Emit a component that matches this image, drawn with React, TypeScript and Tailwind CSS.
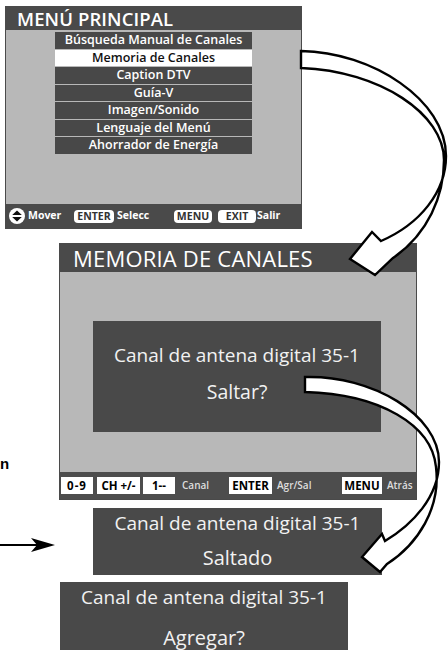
const menuItems = [
  "Búsqueda Manual de Canales",
  "Memoria de Canales",
  "Caption DTV",
  "Guía-V",
  "Imagen/Sonido",
  "Lenguaje del Menú",
  "Ahorrador de Energía",
];

function UpDownIcon() {
  return (
    <svg width="16" height="16" viewBox="0 0 16 16" className="block">
      <circle cx="8" cy="8" r="8" fill="#ffffff" />
      <polygon points="3.2,7 12.8,7 8,2.4" fill="#111111" />
      <polygon points="3.2,9 12.8,9 8,13.6" fill="#111111" />
    </svg>
  );
}

function Arrows() {
  return (
    <svg
      width="448"
      height="650"
      viewBox="0 0 448 650"
      className="absolute left-0 top-0 pointer-events-none"
    >
      <path
        d="M301,51 C372,52 446,100 446,156 C446,192 420,224 381,241 L372,232 L350,259 L375,275 L393,258 C428,234 444,196 444,160 C444,114 380,71 301,68 Z"
        fill="#ffffff"
        stroke="#000000"
        strokeWidth="2.4"
        strokeLinejoin="miter"
      />
      <path
        d="M305,377 C372,375 439,415 439,462 C439,497 412,525 385,541 L382,534 L362,557 L380,572 L387,564 C418,544 441,508 436,467 C432,425 380,394 305,392 Z"
        fill="#ffffff"
        stroke="#000000"
        strokeWidth="2.4"
        strokeLinejoin="miter"
      />
      <line x1="0" y1="545" x2="40" y2="545" stroke="#000000" strokeWidth="2.2" />
      <path d="M31,538 L55,545 L31,552 L37,545 Z" fill="#000000" />
    </svg>
  );
}

export default function App() {
  return (
    <div className="relative w-[448px] h-[650px] overflow-hidden bg-white font-['Open_Sans',sans-serif]">
      <div className="flex flex-col">
        {/* Screen 1: MENÚ PRINCIPAL */}
        <div className="mt-[6px] ml-[5px] w-[297px] h-[223px] flex flex-col border border-[#4a4a4a] bg-[#b8b8b8]">
          <div className="h-[23px] bg-[#4a4a4a] text-white text-[18.5px] font-semibold leading-[24px] pl-[11px] tracking-[0.1px] whitespace-nowrap">
            MENÚ PRINCIPAL
          </div>
          <div className="flex-1 pt-[2px] pl-[49px]">
            <div className="w-[197px] flex flex-col gap-px">
              {menuItems.map((item, i) => (
                <div
                  key={item}
                  className={
                    i === 1
                      ? "h-[16.5px] bg-white text-[#111111] text-[12.5px] font-semibold leading-[16.5px] text-center whitespace-nowrap"
                      : "h-[16.5px] bg-[#484848] text-white text-[12.5px] font-semibold leading-[16.5px] text-center whitespace-nowrap"
                  }
                >
                  {item}
                </div>
              ))}
            </div>
          </div>
          <div className="h-[24px] bg-[#4a4a4a] flex items-center text-white text-[10.5px] font-bold whitespace-nowrap">
            <div className="ml-[3px] w-[16px]">
              <UpDownIcon />
            </div>
            <span className="ml-[3px] w-[46px]">Mover</span>
            <span className="w-[40px] h-[13px] rounded-[4px] bg-white text-[#333333] flex items-center justify-center leading-none">
              ENTER
            </span>
            <span className="ml-[3px] w-[57px]">Selecc</span>
            <span className="w-[38px] h-[13px] rounded-[4px] bg-white text-[#333333] flex items-center justify-center leading-none">
              MENU
            </span>
            <span className="ml-[6px] w-[38px] h-[13px] rounded-[4px] bg-white text-[#333333] flex items-center justify-center leading-none">
              EXIT
            </span>
            <span className="ml-[1px]">Salir</span>
          </div>
        </div>

        {/* Screen 2: MEMORIA DE CANALES */}
        <div className="mt-[14px] ml-[59px] w-[358px] h-[257px] flex flex-col border border-[#4a4a4a] bg-[#b8b8b8]">
          <div className="h-[28px] bg-[#4a4a4a] text-white text-[22px] font-medium leading-[29px] pl-[13px] tracking-[0.2px] whitespace-nowrap">
            MEMORIA DE CANALES
          </div>
          <div className="h-[200px] pt-[49px] pl-[33px]">
            <div className="w-[288px] h-[111px] bg-[#494949] flex flex-col items-center pt-[19px] gap-[7px] text-[#f2f2f2] font-medium whitespace-nowrap">
              <div className="h-[30px] leading-[30px] text-[19px]">Canal de antena digital 35-1</div>
              <div className="h-[30px] leading-[30px] text-[19.5px]">Saltar?</div>
            </div>
          </div>
          <div className="flex-1 bg-[#4d4d4d] flex items-center pl-[1px] whitespace-nowrap">
            <span className="w-[32px] h-[17px] bg-white text-black text-[11.5px] font-bold tracking-[1px] flex items-center justify-center leading-none">
              0-9
            </span>
            <span className="ml-[4px] w-[43px] h-[17px] bg-white text-black text-[11.5px] font-bold flex items-center justify-center leading-none">
              CH +/-
            </span>
            <span className="ml-[3px] w-[32px] h-[17px] bg-white text-black text-[11.5px] font-bold flex items-center justify-center leading-none">
              1--
            </span>
            <span className="ml-[7px] w-[47px] text-[10px] font-semibold text-[#dddddd]">Canal</span>
            <span className="w-[43px] h-[17px] bg-white text-black text-[11.5px] font-bold flex items-center justify-center leading-none">
              ENTER
            </span>
            <span className="ml-[5px] w-[65px] text-[10px] font-semibold text-[#dddddd]">Agr/Sal</span>
            <span className="w-[40px] h-[17px] bg-white text-black text-[11.5px] font-bold flex items-center justify-center leading-none">
              MENU
            </span>
            <span className="ml-[5px] text-[10px] font-semibold text-[#dddddd]">Atrás</span>
          </div>
        </div>

        {/* Saltado box */}
        <div className="mt-[8px] ml-[93px] w-[289px] h-[67px] bg-[#494949] flex flex-col items-center gap-[5px] text-[#f2f2f2] font-medium whitespace-nowrap">
          <div className="h-[30px] leading-[30px] text-[19px]">Canal de antena digital 35-1</div>
          <div className="h-[30px] leading-[30px] text-[20px]">Saltado</div>
        </div>

        {/* Agregar box */}
        <div className="mt-[7px] ml-[60px] w-[288px] h-[72px] bg-[#494949] flex flex-col items-center gap-[11px] text-[#f2f2f2] font-medium whitespace-nowrap">
          <div className="h-[30px] leading-[30px] text-[19px]">Canal de antena digital 35-1</div>
          <div className="h-[30px] leading-[30px] text-[20px]">Agregar?</div>
        </div>
      </div>

      <span className="absolute left-0 top-[456px] text-[15px] font-bold text-black font-['Liberation_Sans',sans-serif] leading-none">
        n
      </span>

      <Arrows />
    </div>
  );
}
